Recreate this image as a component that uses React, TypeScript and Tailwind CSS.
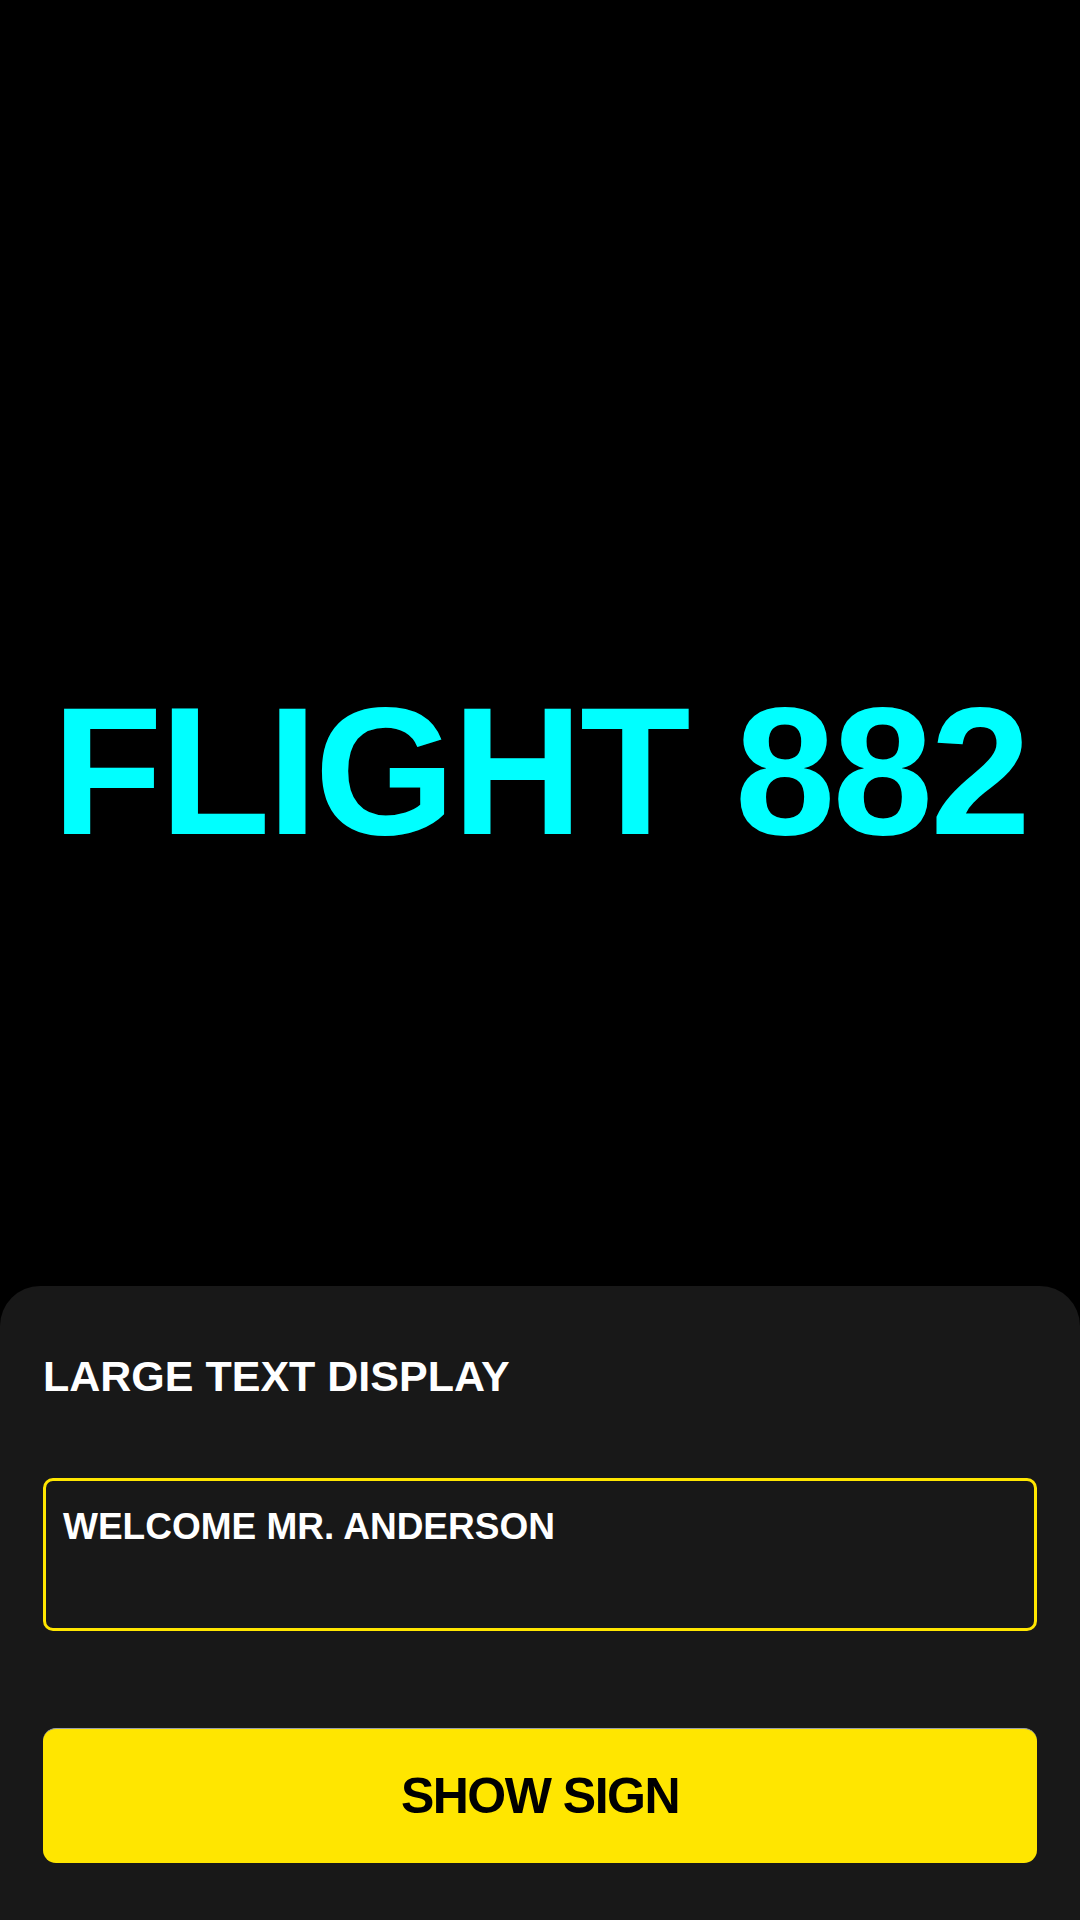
import { useState } from "react"

export default function App() {
  const [message] = useState("WELCOME MR. ANDERSON")

  return (
    <div className="flex h-screen flex-col bg-black font-['Liberation_Sans',Arial,sans-serif]">
      {/* sign preview */}
      <div className="flex flex-1 items-center justify-center pt-[256px]">
        <h1 className="whitespace-nowrap text-[181px] font-bold leading-[200px] tracking-[-3px] text-[#00ffff]">FLIGHT 882</h1>
      </div>

      {/* controls */}
      <div className="rounded-t-[40px] bg-[#181818] px-[43px] pt-[66px] pb-[57px]">
        <h2 className="text-[43px] font-bold leading-[49px] text-white">LARGE TEXT DISPLAY</h2>

        <div className="mt-[77px] h-[153px] rounded-[10px] border-[3px] border-[#ffe600] bg-[#181818] pt-[24px] pl-[17px] pr-[17px]">
          <p className="text-[37px] font-bold leading-[44px] text-white">{message}</p>
        </div>

        <button
          type="button"
          className="mt-[97px] flex h-[135px] w-full items-center justify-center rounded-[13px] border-t border-[#9a9ea6] bg-[#ffe600]"
        >
          <span className="text-[50px] font-bold leading-[56px] tracking-[-1.5px] text-black">SHOW SIGN</span>
        </button>
      </div>
    </div>
  )
}
